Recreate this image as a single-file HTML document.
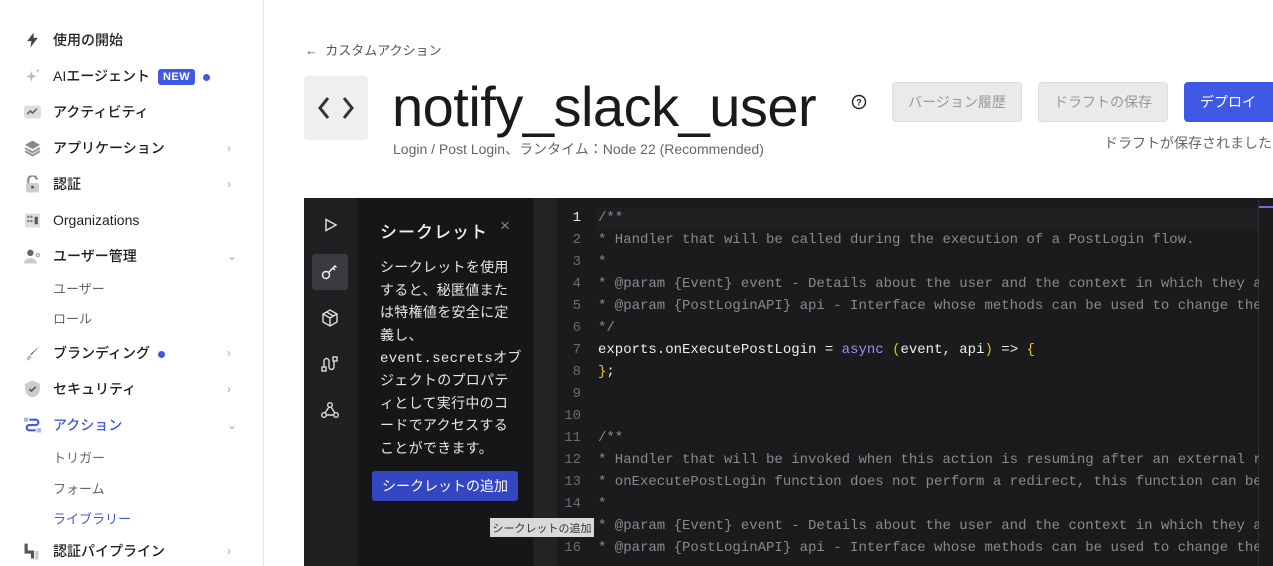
<!DOCTYPE html>
<html><head><meta charset="utf-8"><style>
*{box-sizing:border-box;margin:0;padding:0}
body{width:1273px;height:566px;overflow:hidden;background:#fff;font-family:"Liberation Sans","Noto Sans CJK JP",sans-serif;position:relative;color:#1e1e1e}
.sb{position:absolute;left:0;top:0;width:264px;height:566px;border-right:1px solid #e6e6e6}
.it{position:absolute;left:53px;font-size:14px;font-weight:500;color:#1f1f1f;transform:translateY(-50%)}
.sub{position:absolute;left:53px;font-size:13px;color:#666;transform:translateY(-50%)}
.ic{position:absolute;left:24px;width:17px;height:17px;transform:translateY(-50%)}
.ch{position:absolute;left:227px;font-size:12px;color:#aaa;transform:translateY(-50%)}
.dot{display:inline-block;width:7px;height:7px;border-radius:50%;background:#3f59e4;margin-left:8px;vertical-align:middle}
.new{display:inline-block;background:#3f59e4;color:#fff;font-size:11px;font-weight:700;padding:2px 5px;border-radius:3px;margin-left:8px;vertical-align:middle;letter-spacing:.5px}
.btn{position:absolute;top:82px;height:40px;border-radius:4px;font-size:14px;display:flex;align-items:center;justify-content:center}
.ed{position:absolute;left:304px;top:198px;width:969px;height:368px;background:#1b1b1d;overflow:hidden}
.code{position:absolute;left:0;top:0;font-family:"Liberation Mono","Noto Sans CJK JP",monospace;font-size:14px;}
.ln{position:absolute;left:253px;width:24px;text-align:right;color:#6b6b70}
.cl{position:absolute;left:294px;white-space:pre;color:#8a8a8e}
</style></head><body>
<div class="sb">
 <svg class="ic" style="top:40px" viewBox="0 0 16 16"><path d="M9 1L3 9h4l-1 6 7-9H9z" fill="#444"/></svg>
 <div class="it" style="top:40px">使用の開始</div>
 <svg class="ic" style="top:76px" viewBox="0 0 16 16"><path d="M7 3l1.2 4 4 1.2-4 1.2L7 13.5 5.8 9.4 2 8.2l3.8-1.2z" fill="#bbb"/><path d="M13 1l.5 1.5L15 3l-1.5.5L13 5l-.5-1.5L11 3l1.5-.5z" fill="#bbb"/></svg>
 <div class="it" style="top:76px">AIエージェント<span class="new">NEW</span><span class="dot"></span></div>
 <svg class="ic" style="top:112px" viewBox="0 0 16 16"><rect x="0" y="2" width="16" height="12" rx="2" fill="#ddd"/><path d="M3 10l3-3 2 2 4-4" stroke="#666" stroke-width="1.5" fill="none"/></svg>
 <div class="it" style="top:112px">アクティビティ</div>
 <svg class="ic" style="top:148px" viewBox="0 0 16 16"><path d="M8 1l7 4-7 4-7-4z" fill="#888"/><path d="M1 8l7 4 7-4M1 11l7 4 7-4" stroke="#999" stroke-width="2" fill="none"/></svg>
 <div class="it" style="top:148px">アプリケーション</div><div class="ch" style="top:148px">›</div>
 <svg class="ic" style="top:184px" viewBox="0 0 16 16"><path d="M4 7V4a4 4 0 018 0" stroke="#888" stroke-width="2" fill="none"/><rect x="2" y="7" width="12" height="9" rx="1.5" fill="#ccc"/><circle cx="8" cy="11" r="1.3" fill="#555"/></svg>
 <div class="it" style="top:184px">認証</div><div class="ch" style="top:184px">›</div>
 <svg class="ic" style="top:220px" viewBox="0 0 16 16"><rect x="1" y="2" width="14" height="13" fill="#ddd"/><rect x="10" y="5" width="3" height="7" fill="#555"/><g fill="#777"><rect x="3" y="4" width="2" height="2"/><rect x="6" y="4" width="2" height="2"/><rect x="3" y="8" width="2" height="2"/><rect x="6" y="8" width="2" height="2"/></g></svg>
 <div class="it" style="top:220px">Organizations</div>
 <svg class="ic" style="top:256px" viewBox="0 0 16 16"><circle cx="6" cy="5" r="3" fill="#666"/><path d="M0 15a6 5 0 0112 0z" fill="#ccc"/><circle cx="13" cy="7" r="1.5" fill="none" stroke="#999"/></svg>
 <div class="it" style="top:256px">ユーザー管理</div><div class="ch" style="top:256px">⌄</div>
 <div class="sub" style="top:288px">ユーザー</div>
 <div class="sub" style="top:318px">ロール</div>
 <svg class="ic" style="top:353px" viewBox="0 0 16 16"><path d="M15 1L7 10l-1-1z" fill="#666"/><path d="M6 10c-2 0-3 2-3 3s-1 2-2 2c3 0 6-1 6-4z" fill="#bbb"/></svg>
 <div class="it" style="top:353px">ブランディング<span class="dot"></span></div><div class="ch" style="top:353px">›</div>
 <svg class="ic" style="top:389px" viewBox="0 0 16 16"><path d="M8 0l7 3v5c0 4-3 7-7 8-4-1-7-4-7-8V3z" fill="#ccc"/><path d="M5 8l2 2 4-4" stroke="#555" stroke-width="1.5" fill="none"/></svg>
 <div class="it" style="top:389px">セキュリティ</div><div class="ch" style="top:389px">›</div>
 <svg class="ic" style="top:425px" viewBox="0 0 16 16"><rect x="0" y="1" width="4" height="4" fill="#a9b6f0"/><path d="M5 3h6a2.5 2.5 0 010 5H5a2.5 2.5 0 000 5h6" stroke="#3f59e4" stroke-width="2" fill="none"/><rect x="12" y="11" width="4" height="4" fill="#a9b6f0"/></svg>
 <div class="it" style="top:425px;color:#3f59e4">アクション</div><div class="ch" style="top:425px">⌄</div>
 <div class="sub" style="top:457px">トリガー</div>
 <div class="sub" style="top:488px">フォーム</div>
 <div class="sub" style="top:518px;color:#3f59e4">ライブラリー</div>
 <svg class="ic" style="top:551px" viewBox="0 0 16 16"><path d="M2 1v8h6v6" stroke="#555" stroke-width="3" fill="none"/><path d="M12 8v8" stroke="#ccc" stroke-width="3"/></svg>
 <div class="it" style="top:551px">認証パイプライン</div><div class="ch" style="top:551px">›</div>
</div>

<div style="position:absolute;left:305px;top:40px;font-size:13px;color:#555">←&nbsp;&nbsp;カスタムアクション</div>
<div style="position:absolute;left:304px;top:76px;width:64px;height:64px;background:#efefef;border-radius:4px"></div>
<svg style="position:absolute;left:318px;top:94px" width="36" height="28" viewBox="0 0 36 28"><path d="M10 4L2 14l8 10M26 4l8 10-8 10" stroke="#333" stroke-width="3" fill="none"/></svg>
<div style="position:absolute;left:392px;top:72px;font-size:56px;color:#1a1a1a;letter-spacing:-0.5px;line-height:70px">notify_slack_user</div>
<div style="position:absolute;left:393px;top:139px;font-size:14px;color:#666">Login / Post Login、ランタイム：Node 22 (Recommended)</div>
<svg style="position:absolute;left:851px;top:94px" width="16" height="16" viewBox="0 0 16 16"><circle cx="8" cy="8" r="6.5" stroke="#222" stroke-width="1.4" fill="none"/><text x="8" y="11.5" font-size="9" text-anchor="middle" font-family="Liberation Sans" font-weight="bold" fill="#222">?</text></svg>
<div class="btn" style="left:892px;width:130px;background:#eaeaea;border:1px solid #ddd;color:#999">バージョン履歴</div>
<div class="btn" style="left:1038px;width:130px;background:#eaeaea;border:1px solid #ddd;color:#999">ドラフトの保存</div>
<div class="btn" style="left:1184px;width:100px;background:#3f59e4;color:#fff;justify-content:flex-start;padding-left:16px">デプロイ</div>
<div style="position:absolute;left:1104px;top:133px;font-size:14px;color:#666;white-space:nowrap">ドラフトが保存されました</div>

<div class="ed">
 <div style="position:absolute;left:0;top:0;width:53px;height:368px;background:#202023"></div>
 <div style="position:absolute;left:53px;top:0;width:176px;height:368px;background:#161618"></div>
 <div style="position:absolute;left:229px;top:0;width:24px;height:368px;background:#232326"></div>
 <div style="position:absolute;left:293px;top:10px;width:661px;height:22px;background:#1f1f22"></div>
 <div style="position:absolute;left:954px;top:0;width:1px;height:368px;background:#2e2e31"></div>
 <div style="position:absolute;left:955px;top:8px;width:14px;height:2px;background:#7b68d6"></div>
 <svg style="position:absolute;left:20px;top:20px" width="14" height="14" viewBox="0 0 14 14"><path d="M2 1.5v11l10-5.5z" stroke="#ddd" stroke-width="1.5" fill="none"/></svg>
 <div style="position:absolute;left:8px;top:56px;width:36px;height:36px;background:#3b3b3f;border-radius:3px"></div>
 <svg style="position:absolute;left:16px;top:64px" width="20" height="20" viewBox="0 0 20 20"><circle cx="6" cy="13" r="3.5" stroke="#eee" stroke-width="1.5" fill="none"/><path d="M8.5 10.5l7-7M13 6l2 2M15 4l1.5 1.5" stroke="#eee" stroke-width="1.5"/></svg>
 <svg style="position:absolute;left:17px;top:111px" width="18" height="18" viewBox="0 0 18 18"><path d="M9 1l7 4v8l-7 4-7-4V5zM2 5l7 4 7-4M9 9v8M5.5 3l7 4" stroke="#ddd" stroke-width="1.4" fill="none"/></svg>
 <svg style="position:absolute;left:17px;top:157px" width="18" height="18" viewBox="0 0 18 18"><rect x="1" y="12" width="4" height="4" stroke="#ddd" stroke-width="1.4" fill="none"/><rect x="12" y="2" width="4" height="4" stroke="#ddd" stroke-width="1.4" fill="none"/><path d="M3 12V6a2.5 2.5 0 015 0v6a2.5 2.5 0 005 0V6" stroke="#ddd" stroke-width="1.4" fill="none"/></svg>
 <svg style="position:absolute;left:17px;top:203px" width="18" height="18" viewBox="0 0 18 18"><circle cx="9" cy="4" r="2.3" stroke="#ddd" stroke-width="1.4" fill="none"/><circle cx="3" cy="14" r="2.3" stroke="#ddd" stroke-width="1.4" fill="none"/><circle cx="15" cy="14" r="2.3" stroke="#ddd" stroke-width="1.4" fill="none"/><path d="M8 6l-4 6M10 6l4 6M5 14h8" stroke="#ddd" stroke-width="1.4"/></svg>
 <div style="position:absolute;left:76px;top:20px;font-size:17px;font-weight:500;color:#f0f0f0;letter-spacing:1px">シークレット</div>
 <div style="position:absolute;left:196px;top:18px;font-size:17px;color:#888">×</div>
 <div style="position:absolute;left:76px;top:60px;width:160px;font-size:14px;line-height:22.6px;color:#e6e6e6;font-family:'Liberation Mono','Noto Sans CJK JP',monospace;letter-spacing:0.3px;white-space:nowrap">シークレットを使用<br>すると、秘匿値また<br>は特権値を安全に定<br>義し、<br>event.secretsオブ<br>ジェクトのプロパテ<br>ィとして実行中のコ<br>ードでアクセスする<br>ことができます。</div>
 <div style="position:absolute;left:68px;top:273px;width:146px;height:30px;background:#3447c2;border-radius:3px;color:#fff;font-size:14px;display:flex;align-items:center;justify-content:center">シークレットの追加</div>
 <div class="code">
  <div class="ln" style="top:12px;color:#eee">1</div><div class="cl" style="top:12px">/**</div>
  <div class="ln" style="top:34px">2</div><div class="cl" style="top:34px">* Handler that will be called during the execution of a PostLogin flow.</div>
  <div class="ln" style="top:56px">3</div><div class="cl" style="top:56px">*</div>
  <div class="ln" style="top:78px">4</div><div class="cl" style="top:78px">* @param {Event} event - Details about the user and the context in which they are</div>
  <div class="ln" style="top:100px">5</div><div class="cl" style="top:100px">* @param {PostLoginAPI} api - Interface whose methods can be used to change the b</div>
  <div class="ln" style="top:122px">6</div><div class="cl" style="top:122px">*/</div>
  <div class="ln" style="top:144px">7</div><div class="cl" style="top:144px;color:#eee">exports.onExecutePostLogin = <span style="color:#9d8ff0">async</span> <span style="color:#e8c020">(</span>event, api<span style="color:#e8c020">)</span> =&gt; <span style="color:#e8c020">{</span></div>
  <div class="ln" style="top:166px">8</div><div class="cl" style="top:166px;color:#eee"><span style="color:#e8c020">}</span>;</div>
  <div class="ln" style="top:188px">9</div>
  <div class="ln" style="top:210px">10</div>
  <div class="ln" style="top:232px">11</div><div class="cl" style="top:232px">/**</div>
  <div class="ln" style="top:254px">12</div><div class="cl" style="top:254px">* Handler that will be invoked when this action is resuming after an external red</div>
  <div class="ln" style="top:276px">13</div><div class="cl" style="top:276px">* onExecutePostLogin function does not perform a redirect, this function can be s</div>
  <div class="ln" style="top:298px">14</div><div class="cl" style="top:298px">*</div>
  <div class="ln" style="top:320px">15</div><div class="cl" style="top:320px">* @param {Event} event - Details about the user and the context in which they are</div>
  <div class="ln" style="top:342px">16</div><div class="cl" style="top:342px">* @param {PostLoginAPI} api - Interface whose methods can be used to change the b</div>
 </div>
 <div style="position:absolute;left:186px;top:320px;width:104px;height:19px;background:#d9d9d9;color:#333;font-size:11px;display:flex;align-items:center;justify-content:center">シークレットの追加</div>
 <div style="position:absolute;left:955px;top:10px;width:14px;height:358px;background:#1b1b1d"></div>
</div>
</body></html>
